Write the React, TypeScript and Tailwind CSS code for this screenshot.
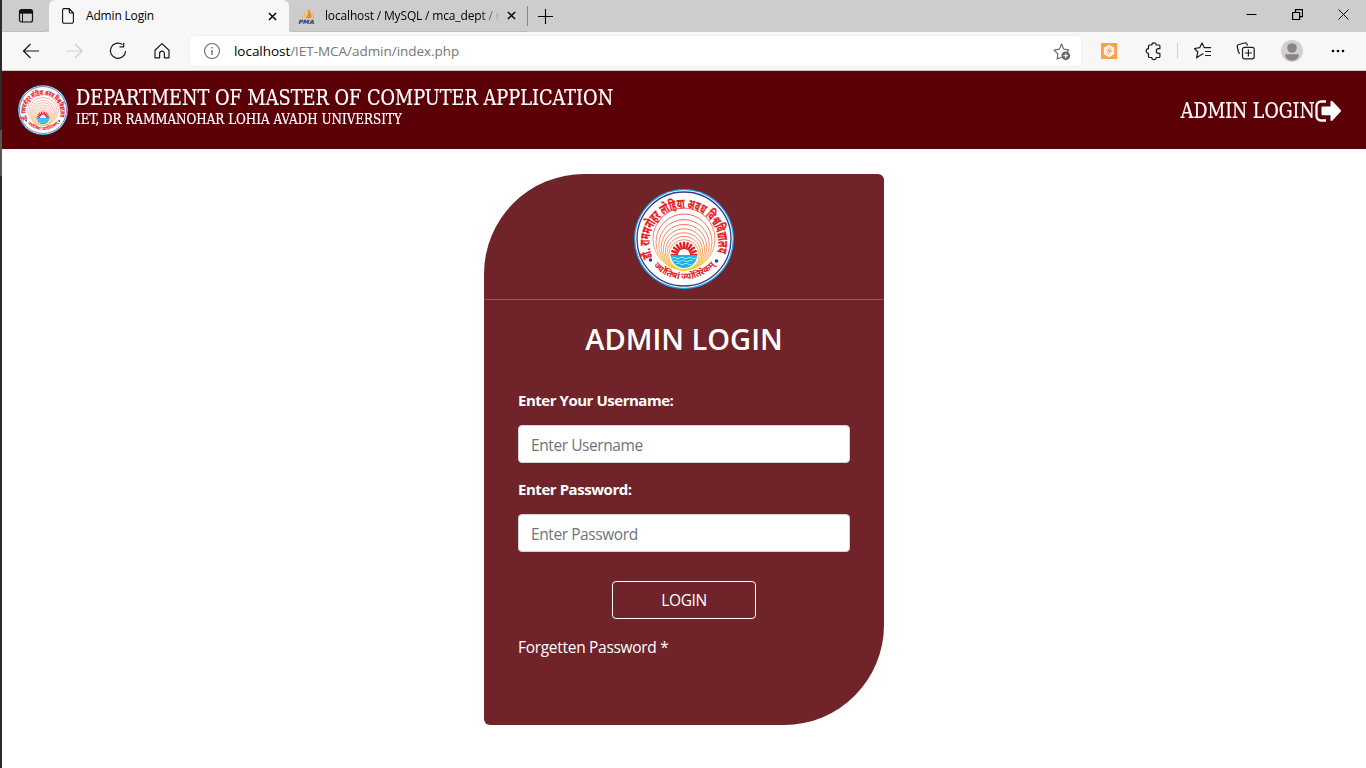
import React from 'react';

const ui = "font-['Open_Sans','Noto_Sans',sans-serif]";

function Seal({ className }: { className: string }) {
  const rays = Array.from({ length: 11 }, (_, i) => 180 + i * 18);
  return (
    <svg viewBox="0 0 100 100" className={className} aria-hidden="true">
      <defs>
        <linearGradient id="rings" x1="0" y1="22" x2="0" y2="82" gradientUnits="userSpaceOnUse">
          <stop offset="0" stopColor="#e8282c" />
          <stop offset=".55" stopColor="#f0703c" />
          <stop offset="1" stopColor="#fbd21c" />
        </linearGradient>
        <path id="sealTop" d="M18.5 68 A34.5 34.5 0 1 1 81 69" />
        <path id="sealBottom" d="M17 74 A41.500 41.500 0 0 0 83 74" />
      </defs>
      <circle cx="50" cy="50" r="50" fill="#19a9e5" />
      <circle cx="50" cy="50" r="48.7" fill="#fff" />
      <circle cx="50" cy="50" r="47" fill="none" stroke="#343a94" strokeWidth="1.3" />
      {[31, 28, 25.2, 22.8, 20.6, 18.6, 16.8, 15.2].map((r) => (
        <circle key={r} cx="50" cy={81 - r} r={r} fill="none" stroke="url(#rings)" strokeWidth=".75" />
      ))}
      <path d="M33 73 Q50 88 67 73 Q60 80 50 80 Q40 80 33 73Z" fill="#fbd21c" />
      <circle cx="50" cy="66" r="13.4" fill="#fff" />
      <g stroke="#e51b24" strokeWidth="2.3">
        {rays.map((a) => (
          <path key={a} d="M56 66H63.3" transform={`rotate(${a} 50 66)`} />
        ))}
      </g>
      <path d="M37 66h26a13 13 0 0 1-26 0Z" fill="#1fb0e8" />
      <path
        d="M38 69q2-1.5 4 0t4 0 4 0 4 0 4 0 4 0M39 72q2-1.5 4 0t4 0 4 0 4 0 4 0M42 75q2-1.5 4 0t4 0 4 0 4 0"
        fill="none" stroke="#c5efff" strokeWidth=".8"
      />
      <circle cx="16.5" cy="71" r="1.8" fill="#343a94" />
      <circle cx="82.5" cy="72" r="1.8" fill="#343a94" />
      <text fill="#e51b24" stroke="#e51b24" strokeWidth=".35" fontSize="13.6" fontWeight="700" fontFamily="Noto Sans Devanagari, Noto Sans, sans-serif">
        <textPath href="#sealTop" textLength="132" lengthAdjust="spacingAndGlyphs">डॉ. राममनोहर लोहिया अवध विश्वविद्यालय</textPath>
      </text>
      <text fill="#e51b24" fontSize="8.8" fontWeight="700" fontFamily="Noto Sans Devanagari, Noto Sans, sans-serif">
        <textPath href="#sealBottom" startOffset="4">ज्योतिषां ज्योतिरेकम्</textPath>
      </text>
    </svg>
  );
}

function Icon({ children, className = 'size-5', w = 1.2 }: { children: React.ReactNode; className?: string; w?: number }) {
  return (
    <svg viewBox="0 0 20 20" className={'shrink-0 ' + className} fill="none" stroke="currentColor" strokeWidth={w} strokeLinejoin="round">
      {children}
    </svg>
  );
}

function TabBar() {
  return (
    <div className="flex h-8 shrink-0 bg-[#cdcdcd] text-[12px] text-black">
      <div className="flex w-[47px] items-center justify-center rounded-br-md border-b border-[#bdbdbd]">
        <svg viewBox="0 0 16 16" className="size-4 shrink-0" fill="none" stroke="#111">
          <rect x="1.5" y="1.5" width="13" height="12.5" rx="2" strokeWidth="1.2" />
          <path d="M2 2.5h12v2.6H2z" fill="#111" />
          <path d="M4.5 5v9" />
        </svg>
      </div>
      <div className="flex h-8 w-60 items-center rounded-t-md bg-[#f7f7f7] pl-[13px] pr-[12px]">
        <svg viewBox="0 0 12 16" className="h-4 w-3 shrink-0" fill="none" stroke="#111" strokeWidth="1.1">
          <path d="M2 .6h5.2L11.4 5v8.8a1.5 1.5 0 0 1-1.5 1.5H2A1.4 1.4 0 0 1 .6 13.8V2A1.4 1.4 0 0 1 2 .6Z M7.2.6v3a1.4 1.4 0 0 0 1.4 1.4h2.8" />
        </svg>
        <span className="ml-3 tracking-[-0.17px]">Admin Login</span>
        <Icon className="ml-auto size-[9px]" w={3.2}><path d="M2 2l16 16M18 2L2 18" /></Icon>
      </div>
      <div className="flex w-[239px] items-center rounded-bl-md border-b border-[#bdbdbd] pl-[9px] pr-[12px]">
        <svg viewBox="0 0 18 16" className="h-4 w-[18px] shrink-0">
          <path d="M2.5 10Q6 7 6.5 3q1.8 4 .5 7.2Z" fill="#f9b86a" />
          <path d="M7.5 10.2Q11 6 10 .5q4.2 4.500 3.300 9.500Z" fill="#f58b1f" />
          <path d="M14 10q1.200-3 .2-5.500 2.400 3 2.300 5.400Z" fill="#f9b050" />
          <text x=".4" y="15.500" fontSize="5.800" fontWeight="700" fontStyle="italic" fill="#34356b" fontFamily="DejaVu Sans" textLength="16" lengthAdjust="spacingAndGlyphs">PMA</text>
        </svg>
        <span className="ml-[9px] w-[174px] overflow-hidden whitespace-nowrap tracking-[-0.16px] [mask-image:linear-gradient(to_right,black_155px,transparent_176px)]">localhost / MySQL / mca_dept / r</span>
        <Icon className="ml-auto size-[9px]" w={3.2}><path d="M2 2l16 16M18 2L2 18" /></Icon>
      </div>
      <div className="flex flex-1 items-center">
        <div className="mr-[10px] -ml-px h-5 w-px bg-[#858585]" />
        <Icon className="size-[15px]" w={1.5}><path d="M10 0v20M0 10h20" /></Icon>
      </div>
      <div className="flex items-start gap-[35px] pt-[9px] pr-[17.5px]">
        <svg viewBox="0 0 11 11" className="size-[11px]" stroke="#000" fill="none"><path d="M.5 5.5h10" /></svg>
        <svg viewBox="0 0 11 11" className="size-[11px]" stroke="#000" fill="none" strokeWidth="1.2"><path d="M.6 3.500h7v7h-7zM3.500 3.500V.6h7v7H7.600" /></svg>
        <svg viewBox="0 0 11 11" className="size-[11px]" stroke="#000" fill="none"><path d="M.5.5l10 10M10.500.5l-10 10" /></svg>
      </div>
    </div>
  );
}

function Toolbar() {
  return (
    <div className="flex h-[39px] shrink-0 items-center border-b border-[#c9c9c9] bg-[#f7f7f7] pl-[18px] text-[#1b1b1b]">
      <Icon><path d="M19 10H4M10.500 3L3.500 10l7 7" /></Icon>
      <Icon className="ml-6 size-5 text-[#cfcfcf]"><path d="M2 10h15.500M11 3l7 7-7 7" /></Icon>
      <Icon className="ml-6 size-5"><path d="M14.500 3.600A7.600 7.600 0 1 0 17.600 10M15.700 1.800v4h-4.200" /></Icon>
      <Icon className="ml-6 size-5"><path d="M3 9.200l7-6.600 7 6.600v7.600h-4.600v-4.300a2.400 2.400 0 0 0-4.800 0v4.300H3Z" /></Icon>
      <div className="ml-[18px] flex h-[30px] w-[891px] items-center rounded bg-white pr-[10px] pl-[13px] shadow-[0_0_2px_rgba(0,0,0,0.08)]">
        <Icon className="size-[18px] text-[#6a6a6a]"><circle cx="10" cy="10" r="8.300" /><path d="M10 9v5.500M10 5.500v1.700" strokeWidth="1.500" /></Icon>
        <span className="ml-[13px] text-[13.5px] tracking-[-0.04px] whitespace-nowrap text-[#767676]"><span className="text-black">localhost</span>/IET-MCA/admin/index.php</span>
        <Icon className="ml-auto size-[19px] text-[#666]">
          <path d="M10 16l-4.600 2 .8-5.600-4-4 5.600-.9L10 2.200l2.400 5.300 5.400.9-1.800 2" />
          <circle cx="14.500" cy="14.500" r="4.600" fill="currentColor" stroke="none" />
          <path d="M14.500 12v5M12 14.500h5" stroke="#fff" />
        </Icon>
      </div>
      <svg viewBox="0 0 16 16" className="ml-5 size-4 shrink-0">
        <rect width="16" height="16" fill="#fba14b" />
        <path d="M8 1.800L13.200 4.800v6.400L8 14.200 2.800 11.200v-6.400Z" fill="#fff4e6" />
        <path d="M8.700 4.500L7 8M9 7.500l-1.500 4M5.500 6.800L8 8M8 8l2.700.8M10.500 5.500L9 8M5.700 9.800L7.700 8.500" stroke="#f6a14f" fill="none" strokeWidth=".9" />
      </svg>
      <Icon className="ml-[27px] size-5"><path d="M5.500 4h2.300a2.200 2.200 0 0 1 4.400 0h2.700a1 1 0 0 1 1 1v2.700h-1.300a2.200 2.200 0 0 0 0 4.600h1.300v3.200a1 1 0 0 1-1 1h-2.700a2.200 2.200 0 0 1-4.400 0H5.500a1 1 0 0 1-1-1v-3.200a2.200 2.200 0 0 1 0-4.600V5a1 1 0 0 1 1-1Z" /></Icon>
      <div className="ml-[13px] h-4 w-px bg-[#d2d2d2]" />
      <Icon className="ml-[15px] size-5"><path d="M10.500 12.500l-2.300 1.300-4.600 3 1.200-5.800L1.500 7.500l5.200-.8L9 2l2.400 4.700H18M12 10.500h6M12 14.500h6" /></Icon>
      <Icon className="ml-[23px] size-5"><path d="M4 12.500C3 12.300 2.800 12 2.500 11L1.300 6c-.3-1.400.4-2.200 1.600-2.500L8.500 2c1.300-.3 2.300.2 2.700 1.600l.3 1M6.500 15.800V8.300a2 2 0 0 1 2-2h7.700a2 2 0 0 1 2 2v7.500a2 2 0 0 1-2 2H8.500a2 2 0 0 1-2-2ZM12.400 8.500v7M8.900 12h7" /></Icon>
      <svg viewBox="0 0 22 22" className="ml-[25px] size-[22px] shrink-0">
        <circle cx="11" cy="11" r="11" fill="#d2d0ce" />
        <circle cx="11" cy="8" r="4.800" fill="#8a8582" />
        <path d="M4 15.500q0-1.200 1.200-1.200h11.600q1.200 0 1.200 1.200-2 5.200-7 5.200t-7-5.200Z" fill="#8a8582" />
      </svg>
      <svg viewBox="0 0 14 4" className="ml-7 h-1 w-[14px] shrink-0"><circle cx="2" cy="2" r="1.300" /><circle cx="7" cy="2" r="1.300" /><circle cx="12" cy="2" r="1.300" /></svg>
    </div>
  );
}

function SiteHeader() {
  return (
    <header className="flex h-[78px] shrink-0 bg-[#5c0008] px-4 pt-[14px] font-['DejaVu_Serif_Condensed','DejaVu_Serif',serif] [font-stretch:condensed] text-white">
      <Seal className="size-[50px] shrink-0" />
      <div className="ml-2 whitespace-nowrap">
        <h1 className="h-[26px] w-fit origin-left scale-x-[0.917] text-[21.5px] leading-[26px] [-webkit-text-stroke:0.2px_white]">DEPARTMENT OF MASTER OF COMPUTER APPLICATION</h1>
        <p className="h-4 w-fit origin-left scale-x-[0.948] text-[14px] leading-4 [-webkit-text-stroke:0.2px_white]">IET, DR RAMMANOHAR LOHIA AVADH UNIVERSITY</p>
      </div>
      <a className="mt-[11px] mr-[9px] ml-auto flex h-[30px] items-center text-[21.5px] leading-[30px] whitespace-nowrap">
        <span className="origin-right scale-x-[0.9] [-webkit-text-stroke:0.2px_white]">ADMIN LOGIN</span>
        <svg viewBox="0 0 26 22" className="h-[22px] w-[26px]" fill="none">
          <path d="M11 1.500H6A4.500 4.500 0 0 0 1.500 6v10A4.500 4.500 0 0 0 6 20.500h5" stroke="#fff" strokeWidth="2.300" />
          <path d="M7.500 6.500h8V1.200q1-.8 2 0l8.300 8.800q.6.8 0 1.600l-8.300 9q-1 .8-2 0v-5.300h-8q-1 0-1-1v-6.800q0-1 1-1Z" fill="#fff" />
        </svg>
      </a>
    </header>
  );
}

function LoginCard() {
  const field = 'block h-[38px] w-[332px] rounded-[4px] border border-[#ced4da] bg-white px-3 pt-px text-[15.5px] tracking-[-0.42px] text-[#212529] outline-none placeholder:text-[#6c757d]';
  return (
    <main className="ml-[482px] mt-[25px] h-[551px] w-[400px] shrink-0 rounded-[6px] rounded-tl-[100px] rounded-br-[100px] bg-[#70242a] pt-[15px] text-white">
      <Seal className="mx-auto size-[100px]" />
      <div className="mt-[10px] h-px bg-[#94595d]" />
      <h2 className="mt-[19px] h-10 text-center text-[29px] leading-10 font-semibold whitespace-nowrap">ADMIN LOGIN</h2>
      <form className="flex flex-col px-[34px]">
        <label className="mt-[29px] h-6 text-[15px] leading-6 font-bold tracking-[-0.47px]"><span>Enter Your Username:</span></label>
        <input className={'mt-[13px] ' + field} placeholder="Enter Username" />
        <label className="mt-[14px] h-6 text-[15px] leading-6 font-bold tracking-[-0.45px]"><span>Enter Password:</span></label>
        <input className={'mt-[13px] ' + field} placeholder="Enter Password" />
        <button type="button" className="mx-auto mt-[29px] h-[38px] w-36 rounded-[4px] border border-white pt-px text-[15.5px] tracking-[-0.4px]">LOGIN</button>
        <a className="mt-4 h-6 text-[15.5px] leading-6 tracking-[-0.3px]">Forgetten Password *</a>
      </form>
    </main>
  );
}

export default function App() {
  return (
    <div className={'flex h-[768px] w-[1366px] overflow-hidden bg-white ' + ui}>
      <div className="flex w-[2px] shrink-0 flex-col bg-[#2a2a2a]">
        <div className="mt-[130px] h-[46px] bg-[#555]" />
      </div>
      <div className="flex min-w-0 flex-1 flex-col">
        <TabBar />
        <Toolbar />
        <SiteHeader />
        <LoginCard />
      </div>
    </div>
  );
}
